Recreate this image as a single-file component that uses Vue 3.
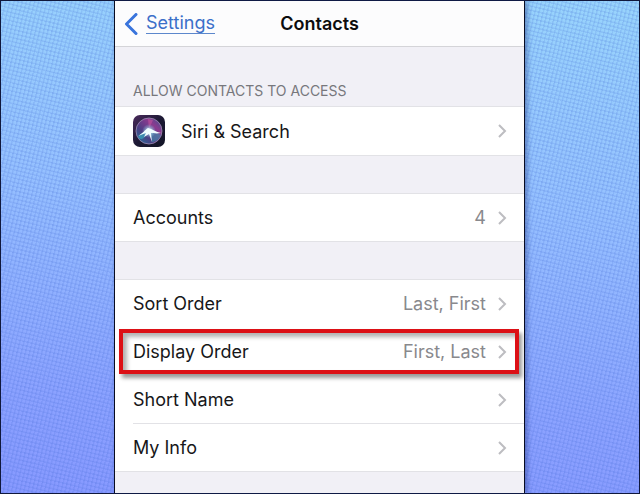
<template>
  <div class="backdrop">
    <main class="phone">
      <header class="navbar">
        <a href="#" class="back">
          <svg class="back-icon" viewBox="0 0 14 22" aria-hidden="true">
            <path d="M12 1.5 L2.5 11 L12 20.5" />
          </svg>
          <span class="back-text">Settings</span>
        </a>
        <h1 class="title">Contacts</h1>
      </header>

      <section v-for="group in groups" :key="group.id" class="section">
        <div class="section-head">
          <h2 v-if="group.heading" class="heading">{{ group.heading }}</h2>
        </div>
        <ul class="list">
          <li v-for="row in group.rows" :key="row.label" class="item" :class="{ marked: row.marked }">
            <button type="button" class="row">
              <svg v-if="row.siri" class="siri" viewBox="0 0 32 32" aria-hidden="true">
                <defs>
                  <linearGradient id="tile" x1="0" y1="0" x2="1" y2="1">
                    <stop offset="0" stop-color="#4a2a5c" />
                    <stop offset="0.5" stop-color="#1c1934" />
                    <stop offset="1" stop-color="#111425" />
                  </linearGradient>
                  <linearGradient id="orb" x1="0" y1="1" x2="1" y2="0">
                    <stop offset="0" stop-color="#1c7ba0" />
                    <stop offset="0.35" stop-color="#4a3f84" />
                    <stop offset="0.7" stop-color="#8c3a8f" />
                    <stop offset="1" stop-color="#3a5390" />
                  </linearGradient>
                  <radialGradient id="glow">
                    <stop offset="0" stop-color="#fff" />
                    <stop offset="0.35" stop-color="#b9e6f2" stop-opacity="0.7" />
                    <stop offset="1" stop-color="#7fc8e8" stop-opacity="0" />
                  </radialGradient>
                </defs>
                <rect width="32" height="32" rx="7" fill="url(#tile)" />
                <circle cx="16" cy="16" r="13" fill="url(#orb)" stroke="#a08bb4" stroke-width="0.8" />
                <path d="M16 15 C12 24 8 26 5 22 C8 18 12 16 16 15Z" fill="#38b5c8" opacity="0.6" />
                <path d="M16 15 C21 16 26 19 28 20 C26 25 22 27 19 27Z" fill="#3d8fae" opacity="0.6" />
                <path d="M16 14 L15 4 L20 5Z" fill="#d45aa2" opacity="0.45" />
                <circle cx="16" cy="16" r="7" fill="url(#glow)" />
                <path d="M5 21 C10 18 12 15 15 13 C19 14 23 17 28 18 C23 19 20 18 18 18 L19 27 L16 19 L11 22 L13 18 C10 19 8 20 5 21Z" fill="#effcff" />
              </svg>
              <span class="label">{{ row.label }}</span>
              <span v-if="row.value" class="value">{{ row.value }}</span>
              <svg class="chevron" viewBox="0 0 10 16" aria-hidden="true">
                <path d="M2 2 L8 8 L2 14" />
              </svg>
            </button>
            <span v-if="row.marked" class="marker"></span>
          </li>
        </ul>
      </section>
    </main>
  </div>
</template>

<script setup>
import { ref } from 'vue'

const groups = ref([
  {
    id: 'access',
    heading: 'ALLOW CONTACTS TO ACCESS',
    rows: [{ label: 'Siri & Search', siri: true }]
  },
  {
    id: 'accounts',
    rows: [{ label: 'Accounts', value: '4' }]
  },
  {
    id: 'display',
    rows: [
      { label: 'Sort Order', value: 'Last, First' },
      { label: 'Display Order', value: 'First, Last', marked: true },
      { label: 'Short Name' },
      { label: 'My Info' }
    ]
  }
])
</script>

<style>
body {
  margin: 0;
}
</style>

<style scoped>
.backdrop {
  box-sizing: border-box;
  min-height: 100vh;
  display: grid;
  grid-template-columns: minmax(0, 113fr) minmax(0, 411fr) minmax(0, 114fr);
  border: 1px solid #10183c;
  background:
    repeating-linear-gradient(14deg, rgba(60, 100, 210, 0.14) 0 1px, transparent 2px 4px),
    repeating-linear-gradient(104deg, rgba(60, 100, 210, 0.14) 0 1px, transparent 2px 4px),
    linear-gradient(184deg, #98d4fc 0%, #95c0ff 40%, #8ba2ff 80%, #8799ff 100%);
  font-family: Inter, "Liberation Sans", sans-serif;
}

.phone {
  grid-column: 2;
  box-sizing: border-box;
  border: solid #080c22;
  border-width: 0 1px;
  background: #f1f0f6;
  box-shadow: 2px 0 5px rgba(20, 40, 110, 0.45);
}

.navbar {
  display: grid;
  grid-template-columns: 1fr auto 1fr;
  align-items: center;
  height: 45px;
  padding: 0 9px;
  background: #fcfcfd;
  border-bottom: 1px solid #d4d4d8;
}

.back {
  display: flex;
  align-items: center;
  gap: 8px;
  color: #3b6fc9;
  text-decoration: none;
}

.back-icon {
  width: 14px;
  height: 22px;
  fill: none;
  stroke: #3974dc;
  stroke-width: 3;
  stroke-linecap: round;
  stroke-linejoin: round;
}

.back-text {
  font-size: 18px;
  line-height: 20px;
  border-bottom: 1px solid #5c87cc;
}

.title {
  margin: 0;
  font-size: 18px;
  font-weight: 600;
  color: #0c0c0e;
}

.section-head {
  height: 37px;
}

.section:first-of-type .section-head {
  height: 59px;
  display: flex;
  align-items: flex-end;
}

.heading {
  margin: 0;
  padding: 0 18px 6px;
  font-size: 14px;
  font-weight: 400;
  line-height: 18px;
  color: #77777c;
}

.list {
  margin: 0;
  padding: 0;
  list-style: none;
  background: #fff;
  border: solid #e2e2e6;
  border-width: 1px 0;
}

.item {
  position: relative;
}

.item + .item::before {
  content: "";
  display: block;
  height: 1px;
  margin-left: 18px;
  background: #e2e2e6;
}

.item.marked::before,
.item.marked + .item::before {
  background: transparent;
}

.row {
  box-sizing: border-box;
  width: 100%;
  height: 47px;
  display: flex;
  align-items: center;
  padding: 0 17px 0 18px;
  border: 0;
  background: transparent;
  font: inherit;
  font-size: 18px;
  color: #171719;
  text-align: left;
  cursor: pointer;
}

.section:first-of-type .row {
  height: 48px;
}

.siri {
  width: 32px;
  height: 32px;
  margin-right: 16px;
}

.label {
  flex: 1;
}

.value {
  color: #89898d;
}

.chevron {
  width: 10px;
  height: 16px;
  margin-left: 11px;
  fill: none;
  stroke: #bdbdc1;
  stroke-width: 2;
}

.marker {
  position: absolute;
  inset: 2px 5px 1px 4px;
  border: 4px solid #dc1016;
  box-shadow:
    3px 4px 4px rgba(0, 0, 0, 0.4),
    inset 4px 4px 4px rgba(0, 0, 0, 0.3);
  pointer-events: none;
}
</style>
